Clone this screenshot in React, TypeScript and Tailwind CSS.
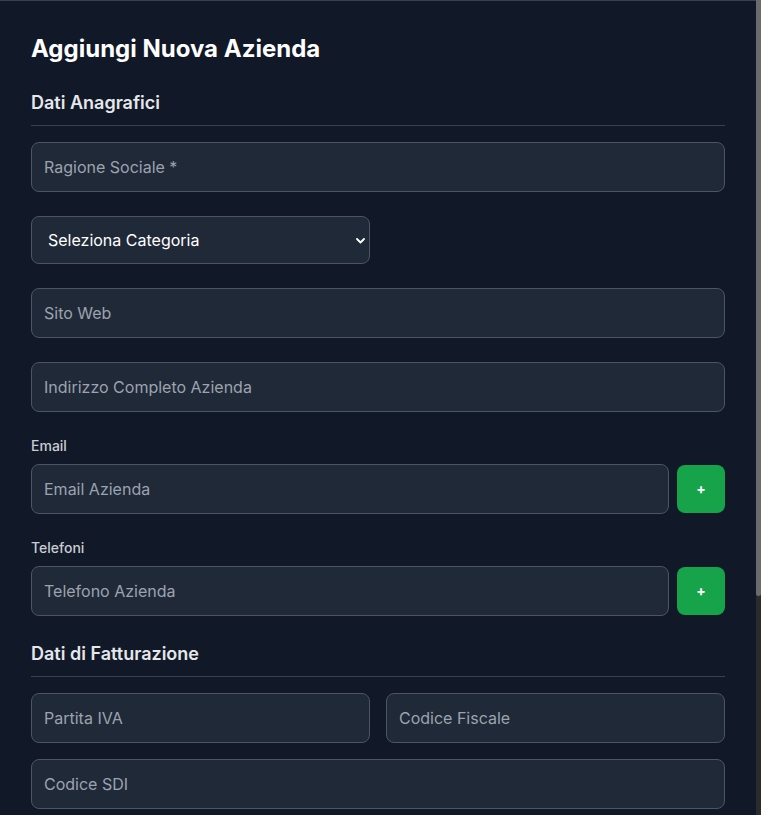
import React from "react";

const inputCls =
  "w-full h-[50px] px-3 bg-[#1f2937] border border-[#4b5563] rounded-lg text-base text-white placeholder:text-[#9ca3af] outline-none";

function SectionHeader({ children }: { children: React.ReactNode }) {
  return (
    <h3 className="text-lg leading-7 font-semibold text-[#e5e7eb] pb-2 mb-4 border-b border-[#374151]">
      {children}
    </h3>
  );
}

function AddRow({ label, placeholder }: { label: string; placeholder: string }) {
  return (
    <div>
      <label className="block text-sm leading-5 font-medium text-[#c9cdd3] mb-2">{label}</label>
      <div className="flex items-center gap-2">
        <input className={inputCls} placeholder={placeholder} />
        <button
          type="button"
          className="shrink-0 w-12 h-12 rounded-lg bg-[#16a34a] text-white text-sm font-bold flex items-center justify-center"
        >
          +
        </button>
      </div>
    </div>
  );
}

export default function App() {
  return (
    <div
      className="w-[761px] h-[815px] overflow-hidden bg-[#111827] flex"
      style={{ fontFamily: "Inter, 'Noto Sans', sans-serif" }}
    >
      {/* form panel */}
      <div className="flex-1 min-w-0 border-t border-[#374151] px-[31px] pt-[32px]">
        <h2 className="text-2xl leading-8 font-bold text-white mb-6">Aggiungi Nuova Azienda</h2>

        <div className="flex flex-col gap-6">
          <div>
            <SectionHeader>Dati Anagrafici</SectionHeader>
            <div className="flex flex-col gap-6">
              <input className={inputCls} placeholder="Ragione Sociale *" />

              <div className="grid grid-cols-2 gap-4">
                <div className="relative">
                  <select className="appearance-none w-full h-12 pl-4 pr-8 bg-[#1f2937] border border-[#4b5563] rounded-lg text-base text-white outline-none">
                    <option>Seleziona Categoria</option>
                    <option>Fornitore</option>
                    <option>Cliente</option>
                  </select>
                  <svg
                    className="pointer-events-none absolute right-[5px] top-[22px]"
                    width="9"
                    height="6"
                    viewBox="0 0 9 6"
                    fill="none"
                  >
                    <path d="M1 1l3.5 3.5L8 1" stroke="white" strokeWidth="1.8" strokeLinecap="round" strokeLinejoin="round" />
                  </svg>
                </div>
              </div>

              <input className={inputCls} placeholder="Sito Web" />
              <input className={inputCls} placeholder="Indirizzo Completo Azienda" />

              <AddRow label="Email" placeholder="Email Azienda" />
              <AddRow label="Telefoni" placeholder="Telefono Azienda" />
            </div>
          </div>

          <div>
            <SectionHeader>Dati di Fatturazione</SectionHeader>
            <div className="grid grid-cols-2 gap-4">
              <input className={inputCls} placeholder="Partita IVA" />
              <input className={inputCls} placeholder="Codice Fiscale" />
              <input className={`${inputCls} col-span-2`} placeholder="Codice SDI" />
            </div>
          </div>
        </div>
      </div>

      {/* scrollbar */}
      <div className="w-[5px] shrink-0 bg-[#2b2b2b] flex flex-col">
        <div className="h-[596px] rounded-b-full bg-[#6b6b6b]" />
      </div>
    </div>
  );
}
